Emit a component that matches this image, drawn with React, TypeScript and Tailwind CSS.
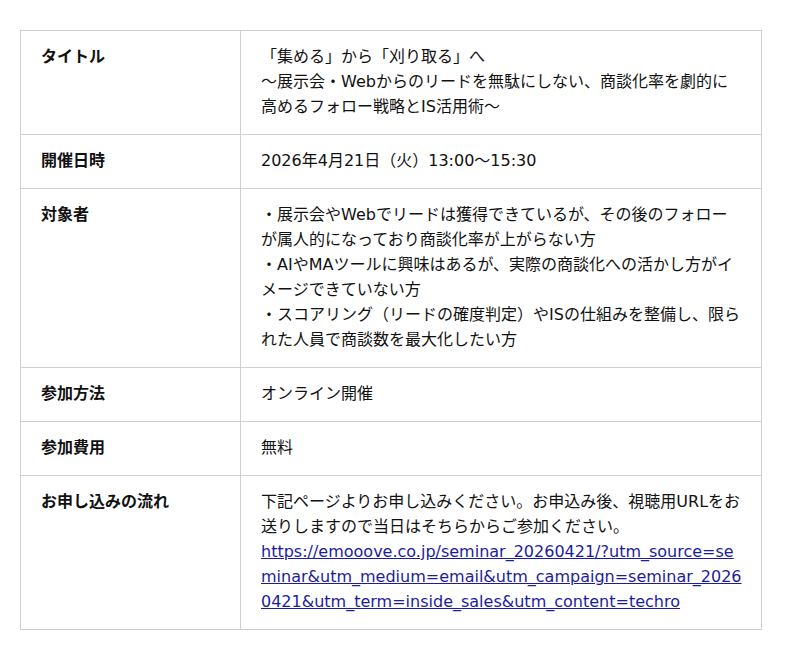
const rows: { label: string; body: React.ReactNode }[] = [
  {
    label: "タイトル",
    body: (
      <>
        「集める」から「刈り取る」へ
        <br />
        ～展示会・Webからのリードを無駄にしない、商談化率を劇的に高めるフォロー戦略とIS活用術～
      </>
    ),
  },
  { label: "開催日時", body: "2026年4月21日（火）13:00～15:30" },
  {
    label: "対象者",
    body: (
      <>
        ・展示会やWebでリードは獲得できているが、その後のフォローが属人的になっており商談化率が上がらない方
        <br />
        ・AIやMAツールに興味はあるが、実際の商談化への活かし方がイメージできていない方
        <br />
        ・スコアリング（リードの確度判定）やISの仕組みを整備し、限られた人員で商談数を最大化したい方
      </>
    ),
  },
  { label: "参加方法", body: "オンライン開催" },
  { label: "参加費用", body: "無料" },
  {
    label: "お申し込みの流れ",
    body: (
      <>
        下記ページよりお申し込みください。お申込み後、視聴用URLをお送りしますので当日はそちらからご参加ください。
        <br />
        <a href="#" className="text-[#1c1ca0] underline break-all">
          https://emooove.co.jp/seminar_20260421/?utm_source=seminar&utm_medium=email&utm_campaign=seminar_20260421&utm_term=inside_sales&utm_content=techro
        </a>
      </>
    ),
  },
];

export default function App() {
  return (
    <div
      className="min-h-screen bg-white px-5 pt-[30px] text-[16px] leading-[25px] text-[#111]"
      style={{ fontFamily: '"DejaVu Sans", "Noto Sans CJK JP", sans-serif' }}
    >
      <table className="w-[742px] border-collapse">
        <tbody>
          {rows.map((r) => (
            <tr key={r.label}>
              <th className="w-[220px] border border-[#d0d0d0] px-5 pt-[13px] pb-[15px] text-left align-top font-bold">
                {r.label}
              </th>
              <td className="border border-[#d0d0d0] pl-5 pr-[19px] pt-[13px] pb-[15px] align-top">
                {r.body}
              </td>
            </tr>
          ))}
        </tbody>
      </table>
    </div>
  );
}
